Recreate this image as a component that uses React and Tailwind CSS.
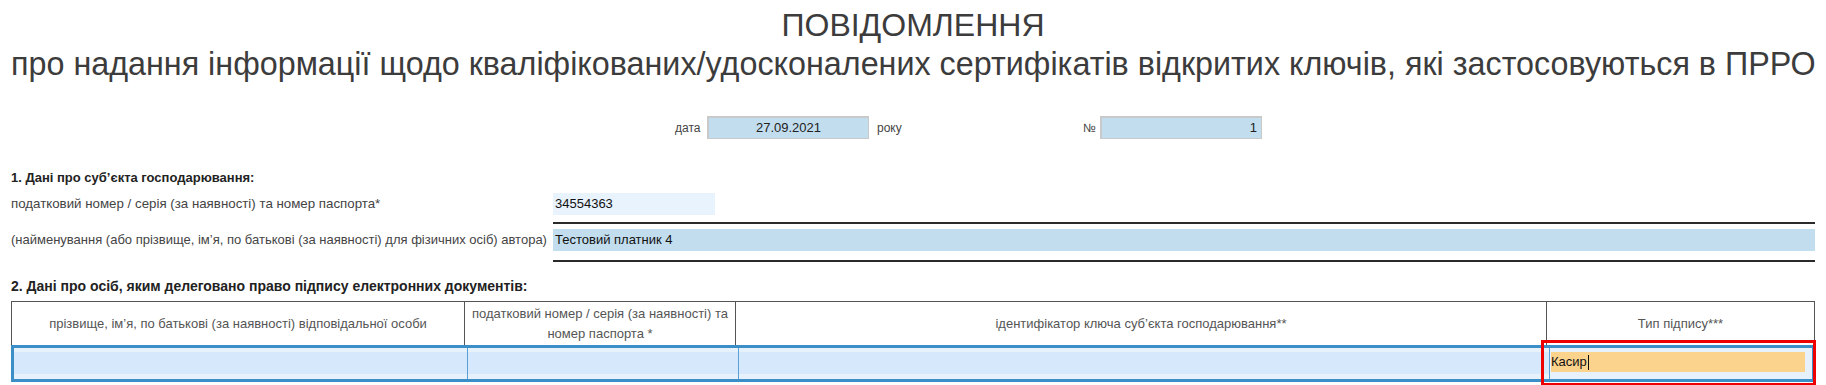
import React from 'react'

const font = "font-['Liberation_Sans',Arial,sans-serif]"

function DateField({ value, align = 'center' }) {
  return (
    <div
      className={`h-[23px] w-[162px] border border-[#c9c9c9] border-t-2 border-l-2 bg-[#c2ddee] px-[4px] text-[13px] leading-[19px] text-[#222] ${align === 'right' ? 'text-right' : 'text-center'}`}
    >
      {value}
    </div>
  )
}

function HeadCell({ children, last = false }) {
  return (
    <div
      className={`flex items-center justify-center border-t border-l border-[#555] px-1 text-center text-[13px] leading-[20px] text-[#555] ${last ? 'border-r' : ''}`}
    >
      {children}
    </div>
  )
}

function DataCell({ children, first = false }) {
  return (
    <div className={`bg-[#e6f1fc] py-[4px] ${first ? '' : 'border-l border-[#5aa0d4]'}`}>
      <div className="h-[22px] bg-[#d6e8fb]">{children}</div>
    </div>
  )
}

export default function App() {
  return (
    <div className={`min-h-[385px] w-full overflow-hidden bg-white px-[11px] ${font}`}>
      {/* heading */}
      <div className="pt-[7px] text-center text-[32px] leading-[36px] text-[#3c3c3c]">ПОВІДОМЛЕННЯ</div>
      <div className="whitespace-nowrap pt-[2px] text-center text-[32.3px] leading-[38px] text-[#3c3c3c]">
        про надання інформації щодо кваліфікованих/удосконалених сертифікатів відкритих ключів, які застосовуються в ПРРО
      </div>

      {/* date + number */}
      <div className="mt-[33px] flex items-center text-[12px] text-[#444]">
        <span className="ml-[664px] w-[32px]">дата</span>
        <DateField value="27.09.2021" />
        <span className="ml-[8px] w-[206px]">року</span>
        <span className="w-[17px]">№</span>
        <DateField value="1" align="right" />
      </div>

      {/* section 1 */}
      <div className="mt-[31px] text-[13px] font-bold leading-[16px] text-[#222]">
        1. Дані про суб’єкта господарювання:
      </div>
      <div className="mt-[7px] grid grid-cols-[542px_1fr] items-start text-[13px]">
        <div className="h-[22px] whitespace-nowrap text-[13.3px] leading-[22px] text-[#444]">
          податковий номер / серія (за наявності) та номер паспорта*
        </div>
        <div className="border-b-2 border-[#2a2a2a] pb-[7px]">
          <div className="h-[22px] w-[162px] bg-[#e8f3fe] px-[2px] leading-[22px] text-[#111]">34554363</div>
        </div>
        <div className="mt-[5px] h-[22px] whitespace-nowrap leading-[22px] text-[#444]">
          (найменування (або прізвище, ім’я, по батькові (за наявності) для фізичних осіб) автора)
        </div>
        <div className="mt-[5px] border-b-2 border-[#2a2a2a] pb-[9px]">
          <div className="h-[22px] bg-[#c2ddee] px-[2px] leading-[22px] text-[#111]">Тестовий платник 4</div>
        </div>
      </div>

      {/* section 2 */}
      <div className="mt-[16px] whitespace-nowrap text-[14px] font-bold leading-[16px] text-[#222]">
        2. Дані про осіб, яким делеговано право підпису електронних документів:
      </div>
      <div className="mt-[7px] grid h-[44px] grid-cols-[453px_271px_811px_1fr]">
        <HeadCell>прізвище, ім’я, по батькові (за наявності) відповідальної особи</HeadCell>
        <HeadCell>податковий номер / серія (за наявності) та номер паспорта *</HeadCell>
        <HeadCell>ідентифікатор ключа суб’єкта господарювання**</HeadCell>
        <HeadCell last>Тип підпису***</HeadCell>
      </div>
      <div className="grid h-[37px] grid-cols-[453px_271px_811px_1fr] border-[3px] border-[#3b8ec6]">
        <DataCell first />
        <DataCell />
        <DataCell />
        <div className="relative border-l border-[#5aa0d4] bg-[#e6f1fc] py-[4px]">
          <div className="ml-[1px] mr-[7px] flex h-[20px] items-center bg-[#fbd38d] text-[13px] text-[#111]">
            Касир<span className="ml-[1px] h-[15px] w-px bg-[#111]" />
          </div>
          <div className="pointer-events-none absolute -left-[9px] -top-[8px] h-[46px] w-[275px] border-[3px] border-[#ee0000]" />
        </div>
      </div>
    </div>
  )
}
